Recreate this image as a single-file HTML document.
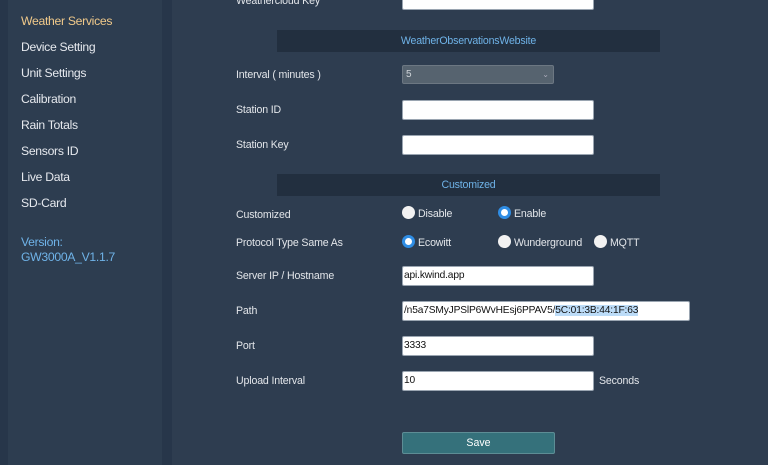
<!DOCTYPE html><html><head><style>
body{margin:0;width:768px;height:465px;background:#2e3d50;font-family:"Liberation Sans",sans-serif;position:relative;overflow:hidden}
.a{position:absolute}
.side{left:8px;top:0;width:154px;height:465px;background:#2d3d50}
.gap{top:0;height:465px;background:#27364a}
.nav{left:21px;font-size:12.2px;letter-spacing:-0.3px;color:#e6e9ee}
.lbl{left:236px;font-size:10.6px;letter-spacing:-0.15px;color:#e3e6ea}
.in{left:402px;width:189px;height:18px;background:#fff;border:1px solid #9aa5b1;border-radius:2px;font-size:10.2px;letter-spacing:-0.15px;color:#111;line-height:18px;padding-left:1px;box-sizing:content-box}
.hdr{left:277px;width:383px;height:22px;background:#222f3f;color:#6fb3e8;font-size:10.6px;letter-spacing:-0.2px;text-align:center;line-height:22px}
.r{width:13px;height:13px;border-radius:50%;background:#f2f2f2}
.r.on{background:#fff;box-sizing:border-box;border:3.5px solid #2f8de4;box-shadow:inset 0 0 0 1px #fff}
.rl{font-size:10.6px;letter-spacing:-0.15px;color:#e3e6ea}
</style></head><body>
<div class="a gap" style="left:0;width:8px"></div>
<div class="a side"></div>
<div class="a gap" style="left:162px;width:10px"></div>
<div class="a nav" style="top:14px;color:#f0c98a">Weather Services</div>
<div class="a nav" style="top:40px">Device Setting</div>
<div class="a nav" style="top:66px">Unit Settings</div>
<div class="a nav" style="top:92px">Calibration</div>
<div class="a nav" style="top:118px">Rain Totals</div>
<div class="a nav" style="top:144px">Sensors ID</div>
<div class="a nav" style="top:170px">Live Data</div>
<div class="a nav" style="top:196px">SD-Card</div>
<div class="a nav" style="top:235px;color:#6fb3e8;line-height:15px">Version:<br>GW3000A_V1.1.7</div>

<div class="a lbl" style="top:-5px">Weathercloud Key</div>
<div class="a in" style="top:-10px"></div>
<div class="a hdr" style="top:30px">WeatherObservationsWebsite</div>
<div class="a lbl" style="top:69px">Interval ( minutes )</div>
<div class="a" style="left:402px;top:65px;width:152px;height:19px;background:#56636f;border:1px solid #6c7782;border-radius:2px;color:#cfd4d9;font-size:10px;line-height:18px;padding-left:3px;box-sizing:border-box">5<span style="position:absolute;right:4px;font-size:8px;color:#aab">&#8964;</span></div>
<div class="a lbl" style="top:104px">Station ID</div>
<div class="a in" style="top:100px"></div>
<div class="a lbl" style="top:139px">Station Key</div>
<div class="a in" style="top:135px"></div>
<div class="a hdr" style="top:174px">Customized</div>
<div class="a lbl" style="top:209px">Customized</div>
<div class="a r" style="left:402px;top:206px"></div><div class="a rl" style="left:418px;top:208px">Disable</div>
<div class="a r on" style="left:498px;top:206px"></div><div class="a rl" style="left:514px;top:208px">Enable</div>
<div class="a lbl" style="top:237px">Protocol Type Same As</div>
<div class="a r on" style="left:402px;top:235px"></div><div class="a rl" style="left:418px;top:237px">Ecowitt</div>
<div class="a r" style="left:498px;top:235px"></div><div class="a rl" style="left:514px;top:237px">Wunderground</div>
<div class="a r" style="left:594px;top:235px"></div><div class="a rl" style="left:610px;top:237px">MQTT</div>
<div class="a lbl" style="top:270px">Server IP / Hostname</div>
<div class="a in" style="top:266px">api.kwind.app</div>
<div class="a lbl" style="top:305px">Path</div>
<div class="a in" style="top:301px;width:285px">/n5a7SMyJPSlP6WvHEsj6PPAV5/<span style="background:#bcdcf8">5C:01:3B:44:1F:63</span></div>
<div class="a lbl" style="top:340px">Port</div>
<div class="a in" style="top:336px">3333</div>
<div class="a lbl" style="top:375px">Upload Interval</div>
<div class="a in" style="top:371px">10</div>
<div class="a rl" style="left:599px;top:375px">Seconds</div>
<div class="a" style="left:402px;top:432px;width:153px;height:22px;background:#35717b;border:1px solid #5d8d95;border-radius:2px;box-sizing:border-box;color:#fff;font-size:10.6px;text-align:center;line-height:20px">Save</div>
</body></html>
